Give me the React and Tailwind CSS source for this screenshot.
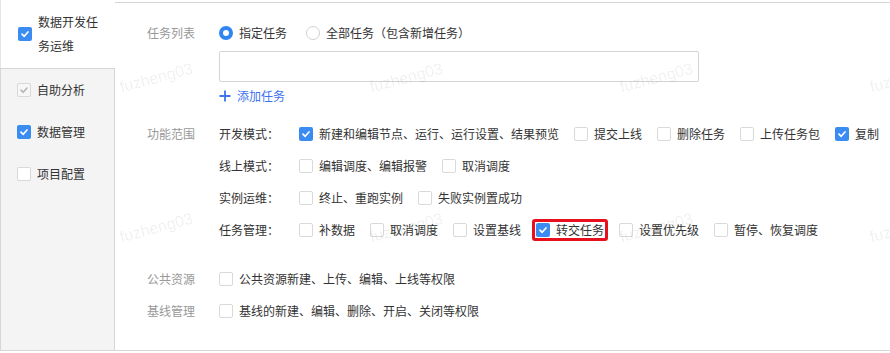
import React from "react";

const FONT = "font-['Noto_Sans_CJK_SC','Liberation_Sans',sans-serif]";

function Check({ checked, disabled }) {
  if (disabled) {
    return (
      <span className="w-[14px] h-[14px] shrink-0 rounded-[2px] border border-[#d9d9d9] bg-[#f7f7f7] flex items-center justify-center">
        <svg width="10" height="10" viewBox="0 0 10 10">
          <path d="M2 5.2 L4.2 7.3 L8 3" fill="none" stroke="#b5b5b5" strokeWidth="1.6" strokeLinecap="round" strokeLinejoin="round" />
        </svg>
      </span>
    );
  }
  if (checked) {
    return (
      <span className="w-[14px] h-[14px] shrink-0 rounded-[2px] bg-[#3a8bf2] flex items-center justify-center">
        <svg width="10" height="10" viewBox="0 0 10 10">
          <path d="M2 5.2 L4.2 7.3 L8 3" fill="none" stroke="#ffffff" strokeWidth="1.7" strokeLinecap="round" strokeLinejoin="round" />
        </svg>
      </span>
    );
  }
  return <span className="w-[14px] h-[14px] shrink-0 rounded-[2px] border border-[#d9d9d9] bg-white" />;
}

function Item({ label, checked, marked }) {
  return (
    <span className="relative flex items-center gap-[6px] mr-[15px] whitespace-nowrap">
      <Check checked={checked} />
      <span className="text-[#333]">{label}</span>
      {marked && (
        <span className="absolute -left-[4px] -right-[4px] top-1/2 -translate-y-1/2 h-[22px] border-[3px] border-[#e8101c] rounded-[3px]" />
      )}
    </span>
  );
}

const SCOPE = [
  {
    name: "开发模式：",
    items: [
      ["新建和编辑节点、运行、运行设置、结果预览", true],
      ["提交上线"],
      ["删除任务"],
      ["上传任务包"],
      ["复制", true],
    ],
  },
  { name: "线上模式：", items: [["编辑调度、编辑报警"], ["取消调度"]] },
  { name: "实例运维：", items: [["终止、重跑实例"], ["失败实例置成功"]] },
  {
    name: "任务管理：",
    items: [
      ["补数据"],
      ["取消调度"],
      ["设置基线"],
      ["转交任务", true, true],
      ["设置优先级"],
      ["暂停、恢复调度"],
    ],
  },
];

const MARKS = [
  [157, 78], [407, 78], [657, 78], [907, 78],
  [157, 228], [407, 228], [657, 228], [907, 228],
];

export default function App() {
  return (
    <div className={`relative w-[890px] h-[353px] bg-white overflow-hidden text-[12px] ${FONT}`}>
      <div className="flex h-[351px] border-b border-[#d6d6d6]">
        {/* Sidebar */}
        <div className="w-[115px] shrink-0 flex flex-col">
          <div className="h-[68px] flex items-center pl-[17px] gap-[6px] bg-white border-l border-[#e6e6e6]">
            <Check checked />
            <span className="w-[62px] leading-[24px] text-[#333]">数据开发任务运维</span>
          </div>
          <div className="flex-1 bg-[#f4f4f4] border-t border-r border-l border-[#d6d6d6]">
            {[
              ["自助分析", false, true],
              ["数据管理", true],
              ["项目配置"],
            ].map(([label, checked, disabled]) => (
              <div key={label} className="h-[42px] flex items-center pl-[16px] gap-[6px]">
                <Check checked={checked} disabled={disabled} />
                <span className="text-[#333]">{label}</span>
              </div>
            ))}
          </div>
        </div>

        {/* Main */}
        <div className="flex-1 mt-[2px] border-t border-[#d6d6d6] pl-[32px] pt-[14px] leading-[20px]">
          <div className="flex">
            <div className="w-[72px] h-[32px] flex items-center text-[#999]">任务列表</div>
            <div className="flex flex-col">
              <div className="h-[32px] flex items-center">
                <span className="w-[14px] h-[14px] rounded-full border-[4px] border-[#2f86f0] bg-white" />
                <span className="ml-[6px] text-[#333]">指定任务</span>
                <span className="ml-[19px] w-[14px] h-[14px] rounded-full border border-[#d0d0d0] bg-white" />
                <span className="ml-[6px] text-[#333]">全部任务（包含新增任务）</span>
              </div>
              <div className="mt-[2px] w-[480px] h-[31px] border border-[#d4d4d4] rounded-[2px]" />
              <div className="h-[28px] flex items-center gap-[6px] text-[#3d72f0]">
                <svg width="12" height="12" viewBox="0 0 12 12">
                  <path d="M6 0.5 V11.5 M0.5 6 H11.5" stroke="#3d72f0" strokeWidth="1.8" />
                </svg>
                <span>添加任务</span>
              </div>
            </div>
          </div>

          <div className="flex mt-[8px]">
            <div className="w-[72px] h-[32px] flex items-center text-[#999]">功能范围</div>
            <div className="flex flex-col">
              {SCOPE.map((row) => (
                <div key={row.name} className="h-[32px] flex items-center">
                  <span className="w-[80px] text-[#333]">{row.name}</span>
                  {row.items.map(([label, checked, marked]) => (
                    <Item key={label} label={label} checked={checked} marked={marked} />
                  ))}
                </div>
              ))}
            </div>
          </div>

          <div className="flex mt-[17px]">
            <div className="w-[72px] h-[32px] flex items-center text-[#999]">公共资源</div>
            <div className="h-[32px] flex items-center">
              <Item label="公共资源新建、上传、编辑、上线等权限" />
            </div>
          </div>
          <div className="flex">
            <div className="w-[72px] h-[32px] flex items-center text-[#999]">基线管理</div>
            <div className="h-[32px] flex items-center">
              <Item label="基线的新建、编辑、删除、开启、关闭等权限" />
            </div>
          </div>
        </div>
      </div>

      {/* watermarks */}
      {MARKS.map(([x, y]) => (
        <span
          key={`${x}-${y}`}
          className="absolute pointer-events-none -rotate-[15deg] text-[16px] leading-[20px] text-[#000]/[0.07] font-['Liberation_Sans',sans-serif] whitespace-nowrap"
          style={{ left: x - 38, top: y - 10 }}
        >
          fuzheng03
        </span>
      ))}
    </div>
  );
}
